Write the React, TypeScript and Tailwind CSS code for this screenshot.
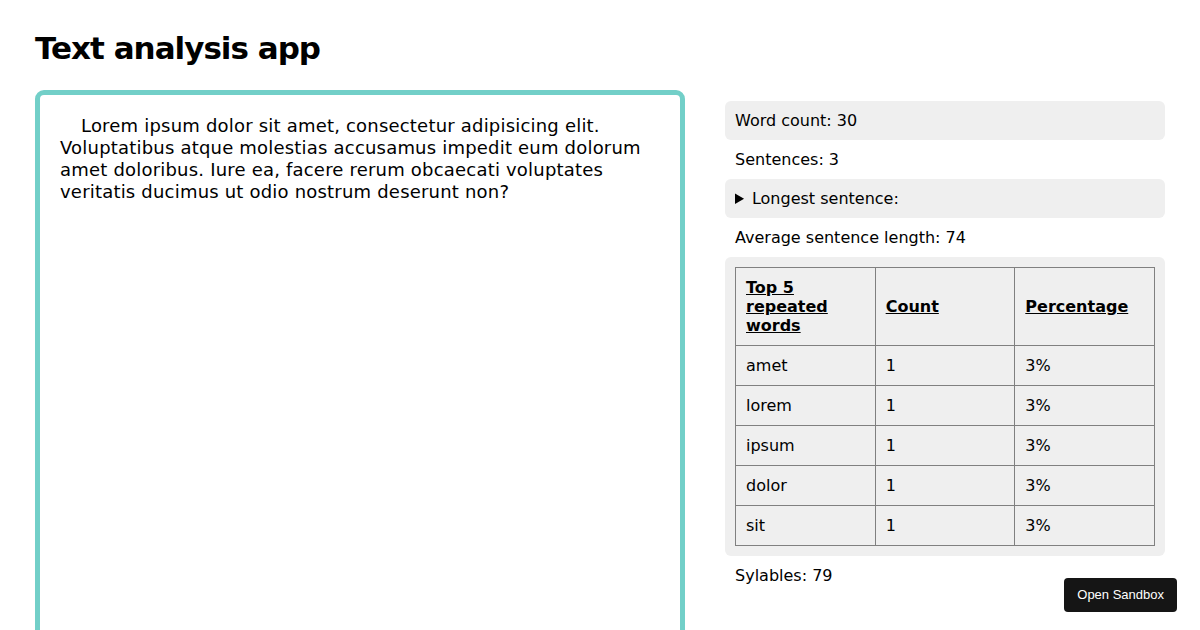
const rows = [
  { word: "amet", count: 1, pct: "3%" },
  { word: "lorem", count: 1, pct: "3%" },
  { word: "ipsum", count: 1, pct: "3%" },
  { word: "dolor", count: 1, pct: "3%" },
  { word: "sit", count: 1, pct: "3%" },
];

const lines = [
  "Lorem ipsum dolor sit amet, consectetur adipisicing elit.",
  "Voluptatibus atque molestias accusamus impedit eum dolorum",
  "amet doloribus. Iure ea, facere rerum obcaecati voluptates",
  "veritatis ducimus ut odio nostrum deserunt non?",
];

export default function App() {
  return (
    <div className="relative h-[630px] overflow-hidden bg-white px-[35px] font-['DejaVu_Sans',sans-serif] text-black">
      <h1 className="pt-[29px] mb-[22px] text-[31px] font-bold leading-[39px] tracking-[-1px]">
        Text analysis app
      </h1>

      <div className="flex items-start gap-[40px]">
        {/* Editor */}
        <div className="h-[600px] w-[650px] shrink-0 rounded-[9px] border-[5px] border-[#72cfc8] p-[20px] text-[18px] leading-[22px] tracking-[0.2px]">
          {lines.map((line, i) => (
            <div
              key={i}
              className={i === 0 ? "whitespace-nowrap indent-[21px]" : "whitespace-nowrap"}
            >
              {line}
            </div>
          ))}
        </div>

        {/* Stats */}
        <div className="mt-[11px] w-[440px] text-[16px] leading-[19px]">
          <div className="rounded-[6px] bg-[#efefef] p-[10px]">Word count: 30</div>
          <div className="p-[10px]">Sentences: 3</div>
          <div className="rounded-[6px] bg-[#efefef] p-[10px]">
            <details>
              <summary className="cursor-pointer">Longest sentence:</summary>
            </details>
          </div>
          <div className="p-[10px]">Average sentence length: 74</div>
          <div className="rounded-[6px] bg-[#efefef] p-[10px]">
            <table className="w-full table-fixed border-collapse border border-[#808080]">
              <thead>
                <tr>
                  <th className="border border-[#808080] p-[10px] text-left align-middle font-bold underline">
                    Top 5 repeated words
                  </th>
                  <th className="border border-[#808080] p-[10px] text-left align-middle font-bold underline">
                    Count
                  </th>
                  <th className="border border-[#808080] p-[10px] text-left align-middle font-bold underline">
                    Percentage
                  </th>
                </tr>
              </thead>
              <tbody>
                {rows.map((r) => (
                  <tr key={r.word}>
                    <td className="border border-[#808080] p-[10px]">{r.word}</td>
                    <td className="border border-[#808080] p-[10px]">{r.count}</td>
                    <td className="border border-[#808080] p-[10px]">{r.pct}</td>
                  </tr>
                ))}
              </tbody>
            </table>
          </div>
          <div className="p-[10px]">Sylables: 79</div>
        </div>
      </div>

      <button className="absolute bottom-[18px] right-[23px] h-[34px] rounded-[4px] bg-[#151515] px-[13px] font-['Liberation_Sans',Arial,sans-serif] text-[13px] text-white">
        Open Sandbox
      </button>
    </div>
  );
}
